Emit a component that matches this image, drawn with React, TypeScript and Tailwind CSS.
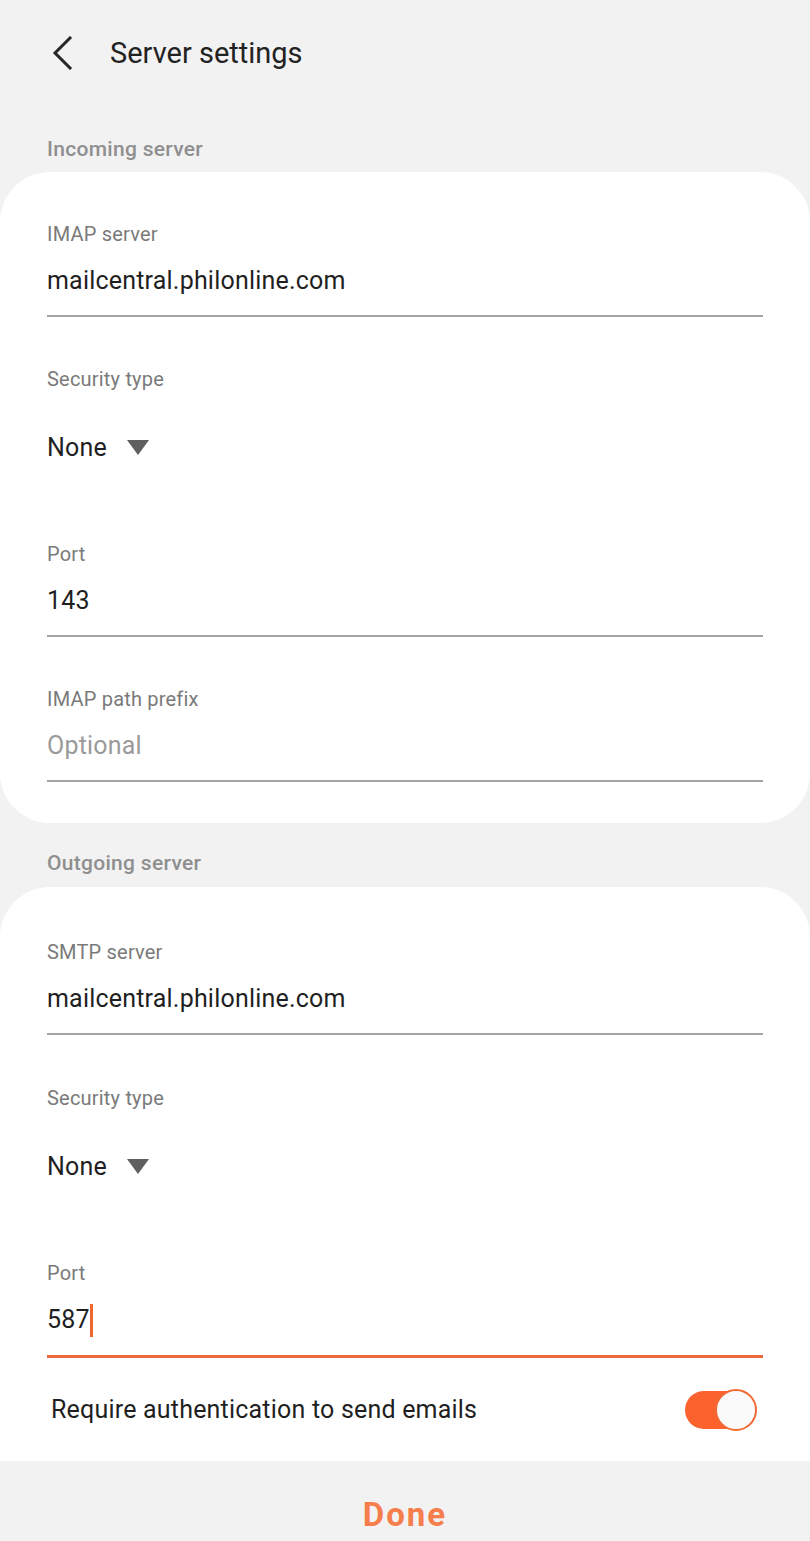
import { ReactNode } from 'react'

const labelCls = 'text-[20px] leading-[26px] tracking-[0.2px] text-[#7a7a7a]'
const valueCls = 'text-[25px] leading-[26px] tracking-[0.2px]'

function Field({ pt, label, value, placeholder }: { pt: string; label: string; value?: string; placeholder?: string }) {
  return (
    <div className={`px-[47px] ${pt}`}>
      <div className={labelCls}>{label}</div>
      <div className={`mt-[21px] h-[26px] ${valueCls} ${value ? 'text-[#1f1f1f]' : 'text-[#9a9a9a]'}`}>
        {value ?? placeholder}
      </div>
      <div className="mt-[21px] h-[2px] bg-[#a3a3a3]" />
    </div>
  )
}

function SecurityField({ pt, label, value }: { pt: string; label: string; value: string }) {
  return (
    <div className={`px-[47px] ${pt}`}>
      <div className={labelCls}>{label}</div>
      <div className={`mt-[43px] flex h-[26px] items-center text-[#1f1f1f] ${valueCls}`}>
        <span>{value}</span>
        <svg width="22" height="15" viewBox="0 0 22 15" className="ml-[20px] mb-[2px]">
          <path d="M0 0 H22 L11 15 Z" fill="#5f5f5f" />
        </svg>
      </div>
    </div>
  )
}

function SectionTitle({ children, className }: { children: ReactNode; className: string }) {
  return (
    <div className={`px-[47px] ${className}`}>
      <div className="h-[24px] text-[21px] leading-[24px] font-medium tracking-[0.3px] text-[#8f8f8f]">{children}</div>
    </div>
  )
}

export default function App() {
  return (
    <div
      className="min-h-[1541px] w-[810px] bg-[#f2f2f2] flex flex-col"
      style={{ fontFamily: 'Roboto, "Noto Sans", sans-serif' }}
    >
      {/* header */}
      <div className="flex h-[106px] items-center">
        <svg width="26" height="34" viewBox="0 0 26 34" className="ml-[49px]">
          <path d="M21 2 L6 17 L21 32" fill="none" stroke="#262626" strokeWidth="3" strokeLinecap="square" />
        </svg>
        <div className="ml-[35px] text-[29px] leading-[34px] text-[#222]">Server settings</div>
      </div>

      <SectionTitle className="pt-[31px] pb-[11px]">Incoming server</SectionTitle>

      <div className="rounded-[50px] bg-white pb-[41px]">
        <Field pt="pt-[49px]" label="IMAP server" value="mailcentral.philonline.com" />
        <SecurityField pt="pt-[49px]" label="Security type" value="None" />
        <Field pt="pt-[80px]" label="Port" value="143" />
        <Field pt="pt-[49px]" label="IMAP path prefix" placeholder="Optional" />
      </div>

      <SectionTitle className="pt-[28px] pb-[12px]">Outgoing server</SectionTitle>

      <div className="rounded-t-[50px] bg-white">
        <Field pt="pt-[52px]" label="SMTP server" value="mailcentral.philonline.com" />
        <SecurityField pt="pt-[50px]" label="Security type" value="None" />
        <div className="px-[47px] pt-[80px]">
          <div className={labelCls}>Port</div>
          <div className={`mt-[21px] flex h-[26px] items-center text-[#1f1f1f] ${valueCls}`}>
            <span>587</span>
            <span className="h-[33px] w-[3px] bg-[#f0662f]" />
          </div>
          <div className="mt-[22px] h-[3px] bg-[#ef6a3a]" />
        </div>
        <div className="flex h-[103px] items-center justify-between pl-[51px] pr-[53px]">
          <span className="text-[25px] tracking-[0.2px] text-[#1f1f1f]">Require authentication to send emails</span>
          <div className="relative h-[40px] w-[72px]">
            <div className="absolute left-0 top-[1px] h-[38px] w-[60px] rounded-full bg-[#fb622d]" />
            <div className="absolute right-0 top-[-1px] h-[42px] w-[42px] rounded-full border-[2px] border-[#f06a35] bg-[#fafafa]" />
          </div>
        </div>
      </div>

      <div className="flex h-[81px] justify-center pt-[34px]">
        <span className="text-[33px] font-bold leading-[40px] tracking-[2px] text-[#f67e4c]">Done</span>
      </div>
    </div>
  )
}
